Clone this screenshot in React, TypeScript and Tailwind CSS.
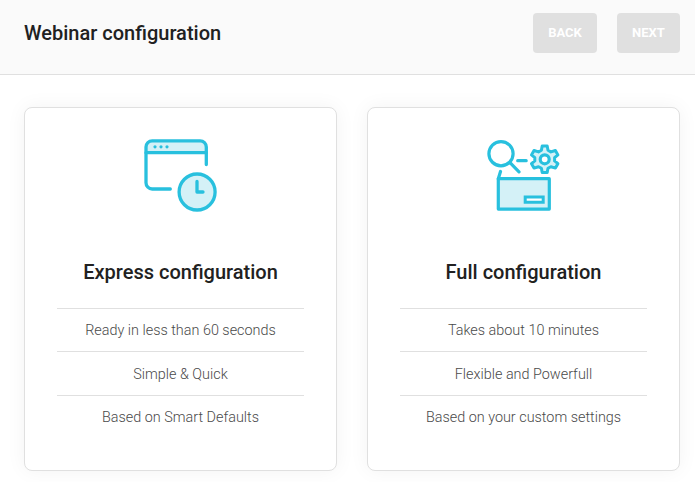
import React from 'react';

interface CardProps {
  title: string;
  features: string[];
  icon: React.ReactNode;
}

const ExpressIcon = () => (
  <svg className="mr-px size-20" viewBox="-0.5 0 80 80" fill="none" stroke="#28c0de" strokeWidth="3.3" strokeLinecap="round" strokeLinejoin="round">
    <path d="M5.5 16.7V11a6.2 6.2 0 0 1 6.2-6.2h47.9a6.2 6.2 0 0 1 6.2 6.2v5.7z" fill="#d4f1f7" />
    <path d="M65.8 16.7v11.8M5.5 16.7v30.1A6.2 6.2 0 0 0 11.7 53h18.1" />
    <g fill="#28c0de" stroke="none">
      <circle cx="14.5" cy="10.8" r="1.6" />
      <circle cx="20.5" cy="10.8" r="1.6" />
      <circle cx="26.5" cy="10.8" r="1.6" />
    </g>
    <circle cx="56.6" cy="56" r="18" fill="#d4f1f7" />
    <path d="M56.5 45.5V56h6" />
  </svg>
);

const FullIcon = () => (
  <svg className="mr-px size-20" viewBox="-0.5 0 80 80" fill="none" stroke="#28c0de" strokeWidth="3.2" strokeLinecap="round" strokeLinejoin="round">
    <circle cx="17.5" cy="17.7" r="12.1" />
    <path d="M27 27.2l8.5 8.7M34.2 24.7h8.5M17 35.5l-2.2 7.2" />
    <path
      d="M58.7 10h5l.8 4.3 2.9 1.6 4.5-1.4 2.5 4.4-3.3 2.8v3.2l3.3 2.8-2.5 4.4-4.5-1.4-2.9 1.6-.8 4.3h-5l-.8-4.3-2.9-1.6-4.5 1.4-2.5-4.4 3.3-2.8v-3.2l-3.3-2.8 2.5-4.4 4.5 1.4 2.9-1.6z"
      fill="#d4f1f7"
      strokeWidth="3"
    />
    <circle cx="61.2" cy="23.3" r="4.5" fill="#fff" />
    <path d="M14.8 42.7h51v30.4h-51z" fill="#d4f1f7" />
    <path d="M41.7 61.1h18v5.1h-18z" fill="#fff" strokeWidth="3" strokeLinejoin="miter" />
  </svg>
);

const ConfigCard: React.FC<CardProps> = ({ title, features, icon }) => (
  <section className="h-[364px] flex-1 rounded-lg border border-[#e0e0e0] bg-white px-8 pt-7 text-center shadow-[0_0_20px_rgba(0,0,0,0.05)]">
    <div className="flex justify-center">{icon}</div>
    <h2 className="mt-10 h-8 text-[20px] leading-8 font-medium text-[#212121]">{title}</h2>
    <ul className="mt-5 text-[14.4px] leading-[22.4px] font-light text-[#4a4a4a]">
      {features.map((feature) => (
        <li key={feature} className="border-t border-[#e0e0e0] pt-[11.3px] pb-[8.7px]">{feature}</li>
      ))}
    </ul>
  </section>
);

const App = () => {
  return (
    <div className="h-[482px] w-full overflow-hidden bg-white font-['Roboto',sans-serif]">
      <header className="flex h-[75px] items-start justify-between border-b border-[#e0e0e0] bg-[#fafafa] pt-[13px] pr-[15px] pl-6">
        <h1 className="text-[20px] leading-10 font-medium text-[#212121]">Webinar configuration</h1>
        <div className="flex gap-5">
          <button disabled className="h-10 w-16 rounded bg-[#e0e0e0] text-[13px] font-bold text-white">BACK</button>
          <button disabled className="h-10 w-[63px] rounded bg-[#e0e0e0] text-[13px] font-bold text-white">NEXT</button>
        </div>
      </header>
      <main className="flex gap-[30px] pt-8 pr-[15px] pl-6">
        <ConfigCard
          title="Express configuration"
          icon={<ExpressIcon />}
          features={['Ready in less than 60 seconds', 'Simple & Quick', 'Based on Smart Defaults']}
        />
        <ConfigCard
          title="Full configuration"
          icon={<FullIcon />}
          features={['Takes about 10 minutes', 'Flexible and Powerfull', 'Based on your custom settings']}
        />
      </main>
    </div>
  );
};

export default App;
